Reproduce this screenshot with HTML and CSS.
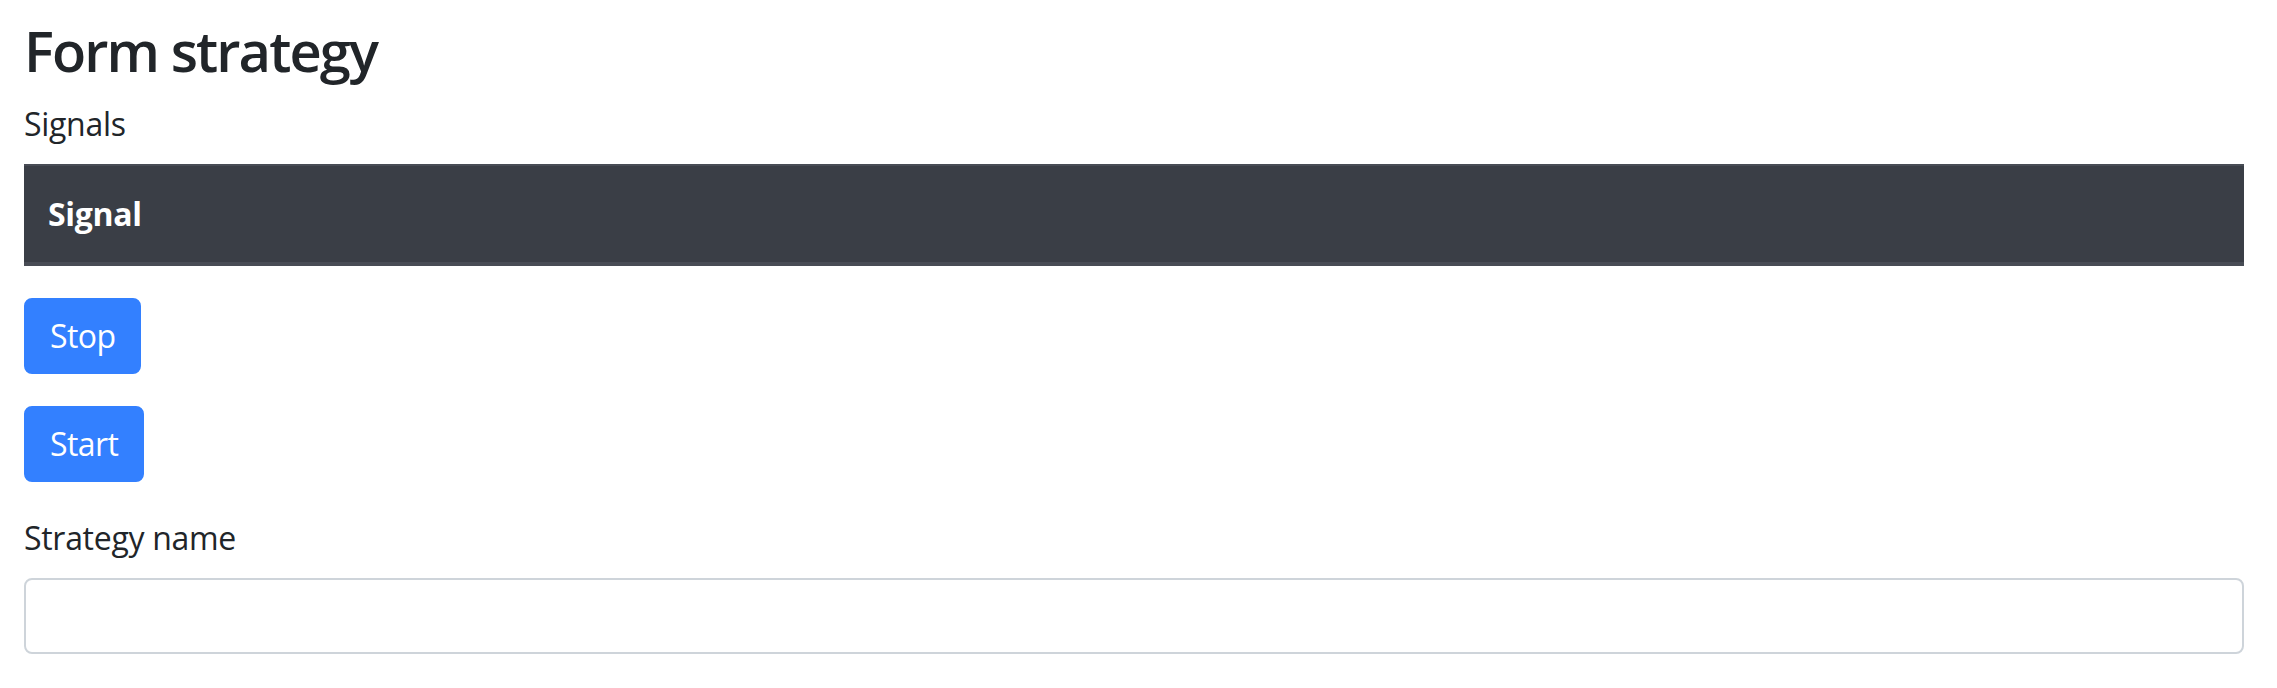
FILE: index.html
```html
<!DOCTYPE html>
<html lang="en">
<head>
<meta charset="utf-8">
<title>Form strategy</title>
<link rel="stylesheet" href="styles.css">
</head>
<body>
<div class="container">
  <h3 class="title">Form strategy</h3>
  <label class="label">Signals</label>
  <table class="table">
    <thead>
      <tr><th>Signal</th></tr>
    </thead>
    <tbody></tbody>
  </table>
  <div class="group">
    <button class="btn" type="button">Stop</button>
  </div>
  <div class="group">
    <button class="btn" type="button">Start</button>
  </div>
  <div class="group">
    <label class="label" for="name">Strategy name</label>
    <input class="input" id="name" type="text">
  </div>
</div>
</body>
</html>
```

FILE: styles.css
```css
* { box-sizing: border-box; }
html, body {
  margin: 0;
  padding: 0;
  background: #ffffff;
}
body {
  font-family: "Open Sans", "Noto Sans", "Liberation Sans", sans-serif;
  font-size: 32px;
  line-height: 1.5;
  color: #212529;
  letter-spacing: -0.3px;
}
.container {
  padding: 17px 33px 0 24px;
}
.title {
  margin: 0 0 16px 0;
  font-size: 56px;
  font-weight: 600;
  line-height: 1.2;
  letter-spacing: -1.9px;
}
.label {
  display: block;
  margin-bottom: 16px;
}
.table {
  width: 100%;
  border-collapse: collapse;
  margin-bottom: 32px;
}
.table th {
  text-align: left;
  font-weight: 700;
  color: #ffffff;
  background: #3a3e46;
  padding: 24px 24px;
  border-top: 2px solid #484c55;
  border-bottom: 4px solid #484c55;
  line-height: 48px;
}
.group {
  margin-bottom: 32px;
}
.btn {
  font-family: inherit;
  font-size: 32px;
  line-height: 48px;
  letter-spacing: -0.6px;
  padding: 12px 24px;
  color: #ffffff;
  background: #3380ff;
  border: 2px solid #3380ff;
  border-radius: 8px;
  display: inline-block;
  cursor: pointer;
}
.input {
  display: block;
  width: 100%;
  height: 76px;
  padding: 12px 24px;
  font-family: inherit;
  font-size: 32px;
  color: #495057;
  background: #ffffff;
  border: 2px solid #ced4da;
  border-radius: 8px;
}
```
